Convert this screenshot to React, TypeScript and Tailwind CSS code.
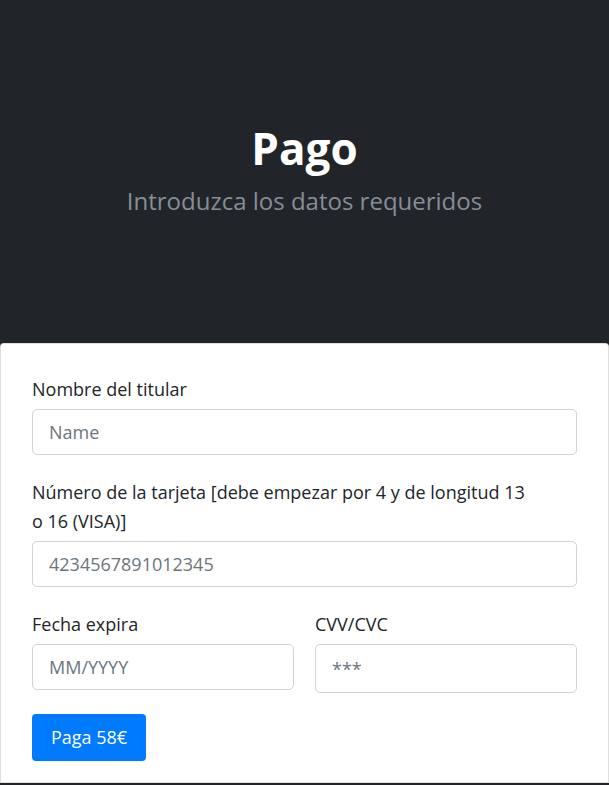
export default function App() {
  return (
    <div className="min-h-screen bg-[#212529] font-['Open_Sans',sans-serif] text-[#212529]">
      {/* Header */}
      <div className="pt-[123px] pb-[124px] text-center">
        <h1 className="text-[44px] leading-[50px] font-bold text-white">Pago</h1>
        <p className="mt-[10px] text-[24px] leading-[36px] text-[#868e96]">Introduzca los datos requeridos</p>
      </div>

      {/* Form card */}
      <div className="bg-white border border-black/[.125] rounded-t-[4px] px-[31px] pt-[31px] pb-[21px]">
        <label className="block text-[18px] leading-[29px] mb-[5px]">Nombre del titular</label>
        <input
          className="block w-full h-[46px] px-[16px] text-[18px] border border-[#ced4da] rounded-[5px] placeholder:text-[#6c757d] outline-none"
          placeholder="Name"
        />

        <label className="block text-[18px] leading-[29px] mb-[5px] mt-[23px]">
          Número de la tarjeta [debe empezar por 4 y de longitud 13
          <br />o 16 (VISA)]
        </label>
        <input
          className="block w-full h-[46px] px-[16px] text-[18px] border border-[#ced4da] rounded-[5px] placeholder:text-[#6c757d] outline-none"
          placeholder="4234567891012345"
        />

        <div className="grid grid-cols-2 gap-[21px] mt-[23px]">
          <div>
            <label className="block text-[18px] leading-[29px] mb-[5px]">Fecha expira</label>
            <input
              className="block w-full h-[46px] px-[16px] text-[18px] border border-[#ced4da] rounded-[5px] placeholder:text-[#6c757d] outline-none"
              placeholder="MM/YYYY"
            />
          </div>
          <div>
            <label className="block text-[18px] leading-[29px] mb-[5px]">CVV/CVC</label>
            <input
              className="block w-full h-[49px] px-[16px] text-[18px] border border-[#ced4da] rounded-[5px] placeholder:text-[#6c757d] outline-none"
              placeholder="***"
            />
          </div>
        </div>

        <button className="mt-[21px] h-[47px] px-[19px] bg-[#007bff] text-white text-[18px] rounded-[4px]">
          Paga 58€
        </button>
      </div>
    </div>
  );
}
